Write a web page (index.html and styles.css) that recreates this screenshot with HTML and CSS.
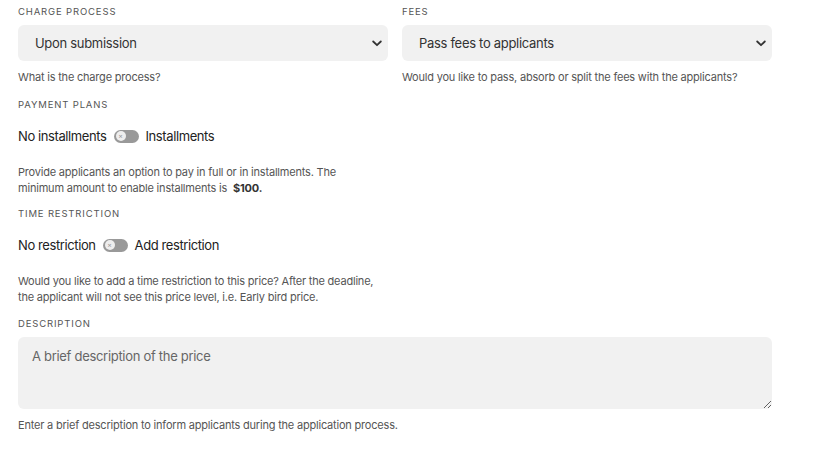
FILE: index.html
```html
<!DOCTYPE html>
<html>
<head>
<meta charset="utf-8">
<link rel="stylesheet" href="styles.css">
</head>
<body>
<div class="form">
  <div class="row">
    <div class="field">
      <div class="label">CHARGE PROCESS</div>
      <div class="select"><span>Upon submission</span>
        <svg class="chev" width="10" height="7" viewBox="0 0 10 7"><path d="M1.2 1.5 L5 5.2 L8.8 1.5" fill="none" stroke="#333" stroke-width="1.8" stroke-linecap="round" stroke-linejoin="round"/></svg>
      </div>
      <div class="help">What is the charge process?</div>
    </div>
    <div class="field">
      <div class="label">FEES</div>
      <div class="select"><span>Pass fees to applicants</span>
        <svg class="chev" width="10" height="7" viewBox="0 0 10 7"><path d="M1.2 1.5 L5 5.2 L8.8 1.5" fill="none" stroke="#333" stroke-width="1.8" stroke-linecap="round" stroke-linejoin="round"/></svg>
      </div>
      <div class="help">Would you like to pass, absorb or split the fees with the applicants?</div>
    </div>
  </div>

  <div class="section narrow first">
    <div class="label">PAYMENT PLANS</div>
    <div class="toggle-row">
      <span>No installments</span>
      <span class="toggle"><span class="knob">×</span></span>
      <span>Installments</span>
    </div>
    <div class="help para">Provide applicants an option to pay in full or in installments. The minimum amount to enable installments is <b class="amt">$100.</b></div>
  </div>

  <div class="section narrow">
    <div class="label">TIME RESTRICTION</div>
    <div class="toggle-row">
      <span>No restriction</span>
      <span class="toggle"><span class="knob">×</span></span>
      <span>Add restriction</span>
    </div>
    <div class="help para">Would you like to add a time restriction to this price? After the deadline, the applicant will not see this price level, i.e. Early bird price.</div>
  </div>

  <div class="section last">
    <div class="label">DESCRIPTION</div>
    <textarea class="textarea" placeholder="A brief description of the price"></textarea>
    <div class="help after-area">Enter a brief description to inform applicants during the application process.</div>
  </div>
</div>
</body>
</html>
```

FILE: styles.css
```css
* { box-sizing: border-box; }
body {
  margin: 0;
  background: #fff;
  font-family: Inter, "Noto Sans", sans-serif;
  color: #222;
}
.form {
  width: 754px;
  margin-left: 18px;
  padding-top: 6px;
}
.row {
  display: grid;
  grid-template-columns: 370px 370px;
  column-gap: 14px;
}
.label {
  font-size: 9.5px;
  letter-spacing: 0.85px;
  color: #555;
  line-height: 12px;
  height: 12px;
}
.select {
  margin-top: 7px;
  height: 36px;
  background: #f1f1f1;
  border-radius: 6px;
  display: flex;
  align-items: center;
  justify-content: space-between;
  padding: 0 6px 0 17px;
  font-size: 13px;
  letter-spacing: -0.3px;
  color: #333;
}
.help {
  font-size: 11px;
  letter-spacing: -0.2px;
  color: #555;
  line-height: 16px;
  margin-top: 8px;
}
.section { margin-top: 12px; }
.section.first { margin-top: 14px; }
.section.last { margin-top: 13px; }
.section.narrow { width: 362px; }
.toggle-row {
  display: flex;
  align-items: center;
  gap: 7px;
  font-size: 13px;
  letter-spacing: -0.4px;
  color: #222;
  margin-top: 17px;
  height: 16px;
}
.toggle {
  width: 25px;
  height: 13px;
  background: #999;
  border-radius: 7px;
  position: relative;
  display: inline-block;
}
.knob {
  position: absolute;
  left: 2px;
  top: 1.5px;
  width: 10px;
  height: 10px;
  border-radius: 50%;
  background: #eee;
  font-size: 7px;
  line-height: 10px;
  text-align: center;
  color: #999;
  letter-spacing: 0;
}
.para { margin-top: 20px; }
.help b { color: #333; font-weight: 700; }
.amt { margin-left: 3px; }
.textarea {
  display: block;
  width: 754px;
  height: 72px;
  margin-top: 7px;
  border: none;
  background: #f1f1f1;
  border-radius: 6px;
  padding: 11px 14px;
  font-family: Inter, "Noto Sans", sans-serif;
  font-size: 13px;
  letter-spacing: -0.3px;
  color: #333;
  resize: vertical;
  outline: none;
}
.textarea::placeholder { color: #666; }
.help.after-area { margin-top: 8px; }
```
